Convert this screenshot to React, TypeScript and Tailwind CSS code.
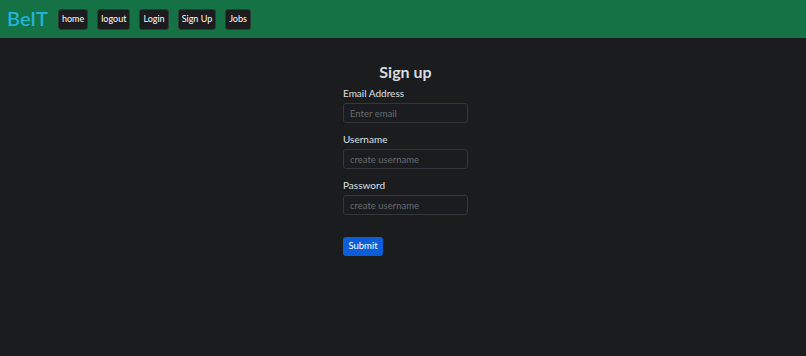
import React from "react";

const navItems = ["home", "logout", "Login", "Sign Up", "Jobs"];

const Field = ({ label, placeholder, type = "text" }: { label: string; placeholder: string; type?: string }) => (
    <div className="flex flex-col">
        <label className="text-[10px] leading-[12px] text-[#dee2e6] mb-[4px]">{label}</label>
        <input
            type={type}
            placeholder={placeholder}
            className="w-[125px] h-[20px] px-[6px] rounded-[3px] border border-[#33373b] bg-[#1b1c1f] text-[9.5px] text-[#dee2e6] placeholder:text-[#666b71] outline-none"
        />
    </div>
);

export default function App() {
    return (
        <div className="min-h-[356px] w-full bg-[#1b1c1e] font-['Lato',sans-serif]">
            <nav className="h-[38px] bg-[#157244] flex items-center pl-[7px] gap-[9px]">
                <span className="text-[20px] leading-none font-semibold text-[#21b4d6] pb-[2px] mr-[1px]">BeIT</span>
                {navItems.map((item) => (
                    <button
                        key={item}
                        className="h-[21px] px-[3px] rounded-[3px] bg-[#1c1c1f] border border-[#2f3a34] text-[9px] text-white"
                    >
                        {item}
                    </button>
                ))}
            </nav>
            <main className="flex justify-center pt-[24px] pl-[5px]">
                <form className="flex flex-col w-[125px]">
                    <h1 className="text-[16px] leading-[20px] font-bold text-[#d8dce0] text-center whitespace-nowrap mb-[5px]">Sign up</h1>
                    <div className="flex flex-col gap-[10px]">
                        <Field label="Email Address" placeholder="Enter email" type="email" />
                        <Field label="Username" placeholder="create username" />
                        <Field label="Password" placeholder="create username" type="password" />
                    </div>
                    <div className="pt-[16px]">
                        <button type="button" className="h-[19px] w-[40px] rounded-[3px] bg-[#0b5ed7] text-[9.5px] text-white">
                            Submit
                        </button>
                    </div>
                </form>
            </main>
        </div>
    );
}
